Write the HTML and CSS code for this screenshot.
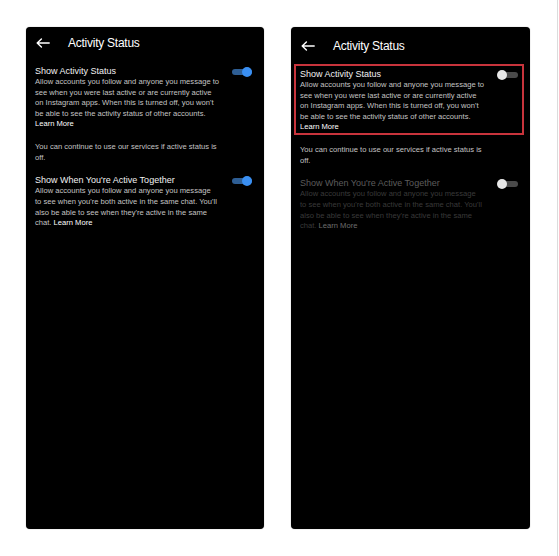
FILE: index.html
```html
<!DOCTYPE html>
<html lang="en">
<head>
<meta charset="utf-8">
<title>Activity Status</title>
<link rel="stylesheet" href="styles.css">
</head>
<body>
<div class="page">
  <div class="phone">
    <div class="header">
      <svg class="back" viewBox="0 0 14 10" width="14" height="10"><path d="M13.2 5H1.2M5.4 0.9L1.2 5L5.4 9.1" fill="none" stroke="#fff" stroke-width="1.4" stroke-linecap="round" stroke-linejoin="round"/></svg>
      <span class="title">Activity Status</span>
    </div>
    <div class="section">
      <div class="row"><span class="heading">Show Activity Status</span><span class="toggle toggle--on"></span></div>
      <p class="desc">Allow accounts you follow and anyone you message to<br>see when you were last active or are currently active<br>on Instagram apps. When this is turned off, you won't<br>be able to see the activity status of other accounts.<br><span class="link">Learn More</span></p>
    </div>
    <p class="note">You can continue to use our services if active status is<br>off.</p>
    <div class="section section--second">
      <div class="row"><span class="heading">Show When You're Active Together</span><span class="toggle toggle--on"></span></div>
      <p class="desc">Allow accounts you follow and anyone you message<br>to see when you're both active in the same chat. You'll<br>also be able to see when they're active in the same<br>chat. <span class="link">Learn More</span></p>
    </div>
  </div>

  <div class="phone phone--right">
    <div class="header">
      <svg class="back" viewBox="0 0 14 10" width="14" height="10"><path d="M13.2 5H1.2M5.4 0.9L1.2 5L5.4 9.1" fill="none" stroke="#fff" stroke-width="1.4" stroke-linecap="round" stroke-linejoin="round"/></svg>
      <span class="title">Activity Status</span>
    </div>
    <div class="section section--marked">
      <div class="row"><span class="heading">Show Activity Status</span><span class="toggle"></span></div>
      <p class="desc">Allow accounts you follow and anyone you message to<br>see when you were last active or are currently active<br>on Instagram apps. When this is turned off, you won't<br>be able to see the activity status of other accounts.<br><span class="link">Learn More</span></p>
    </div>
    <p class="note">You can continue to use our services if active status is<br>off.</p>
    <div class="section section--second section--dim">
      <div class="row"><span class="heading">Show When You're Active Together</span><span class="toggle"></span></div>
      <p class="desc">Allow accounts you follow and anyone you message<br>to see when you're both active in the same chat. You'll<br>also be able to see when they're active in the same<br>chat. <span class="link">Learn More</span></p>
    </div>
  </div>
</div>
</body>
</html>
```

FILE: styles.css
```css
* { box-sizing: border-box; }

html, body {
  margin: 0;
  padding: 0;
  background: #fff;
}

body {
  font-family: "Liberation Sans", Arial, sans-serif;
}

.page {
  width: 558px;
  height: 556px;
  border-right: 1px solid #dcdcdc;
  display: flex;
  align-items: flex-start;
  gap: 27px;
  padding: 27px 0 0 26px;
}

.phone {
  width: 238px;
  height: 502px;
  background: #000;
  border-radius: 4px;
  box-shadow: 0 0 1px rgba(0, 0, 0, 0.5);
  padding: 0 12px 0 9px;
  color: #f2f2f2;
}

.phone--right {
  width: 239px;
  padding-top: 3px;
}

.header {
  height: 32px;
  display: flex;
  align-items: center;
}

.back {
  display: block;
  margin-left: 1px;
  flex: none;
}

.title {
  margin-left: 18px;
  font-size: 12px;
  letter-spacing: -0.25px;
  color: #fff;
  line-height: 14px;
}

.section {
  margin-top: 7px;
}

.section--marked {
  margin: 2px -6px -2px -6px;
  padding: 3px 4px 0 4px;
  border: 2px solid #c8343c;
}

.section--second {
  margin-top: 11.7px;
}

.row {
  height: 11px;
  display: flex;
  align-items: center;
  justify-content: space-between;
}

.heading {
  font-size: 9px;
  line-height: 11px;
  color: #f2f2f2;
  white-space: nowrap;
}

.desc {
  margin: 0;
  font-size: 7.6px;
  line-height: 10.6px;
  color: #c4c4c4;
  white-space: nowrap;
}

.link {
  color: #fff;
}

.note {
  margin: 11px 0 0 0;
  font-size: 7.6px;
  line-height: 11.4px;
  color: #c4c4c4;
  white-space: nowrap;
}

.toggle {
  position: relative;
  width: 21px;
  height: 10px;
  flex: none;
}

.toggle::before {
  content: "";
  position: absolute;
  left: 0.5px;
  right: 0.5px;
  top: 2px;
  height: 6px;
  border-radius: 3px;
  background: #4a4a4a;
}

.toggle::after {
  content: "";
  position: absolute;
  left: 0;
  top: 0;
  width: 10px;
  height: 10px;
  border-radius: 50%;
  background: #e8e8e8;
}

.toggle--on::before {
  background: #2e5e94;
}

.toggle--on::after {
  left: auto;
  right: 0;
  background: #3a8ff2;
}

.section--dim .heading {
  color: #5c5c5c;
}

.section--dim .desc {
  color: #3a3a3a;
}

.section--dim .link {
  color: #6e6e6e;
}
```
